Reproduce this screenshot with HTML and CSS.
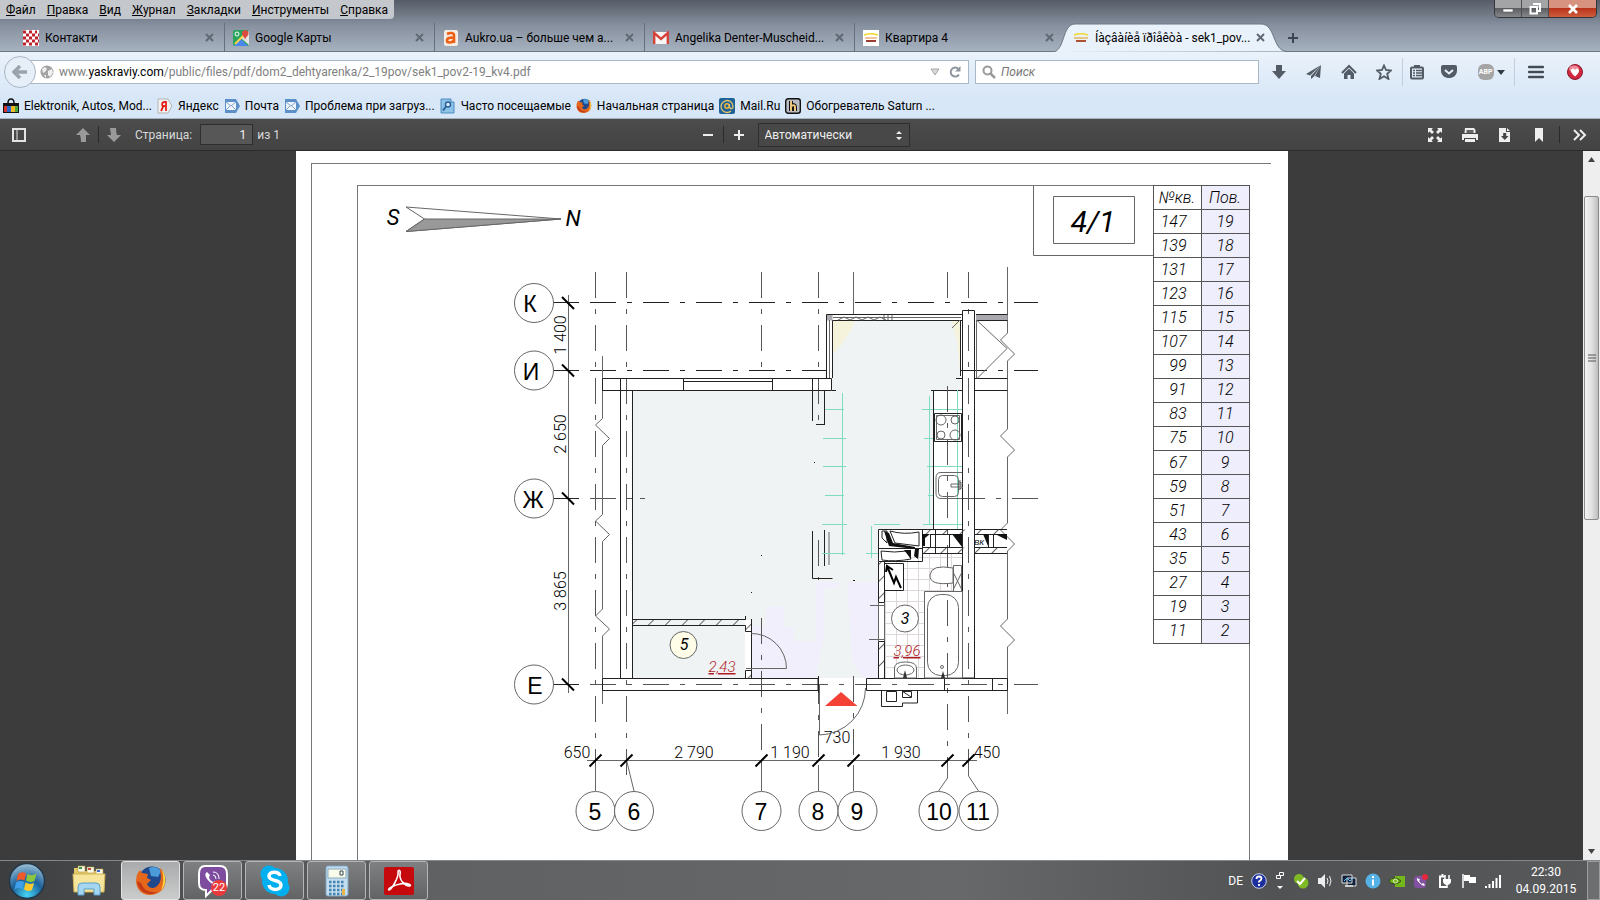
FILE: index.html
```html
<!DOCTYPE html>
<html lang="ru">
<head>
    <meta charset="UTF-8">
    <meta name="viewport" content="width=device-width, initial-scale=1.0">
    <title>sek1_pov2-19_kv4.pdf</title>
    <link rel="stylesheet" href="styles.css">
</head>
<body>
    <!-- Window frame: menu and tabs -->
    <header class="titlebar">
        <div class="menu-row">
            <nav class="menu">
                <button><u>Ф</u>айл</button>
                <button><u>П</u>равка</button>
                <button><u>В</u>ид</button>
                <button><u>Ж</u>урнал</button>
                <button><u>З</u>акладки</button>
                <button><u>И</u>нструменты</button>
                <button><u>С</u>правка</button>
            </nav>
            <div class="window-controls">
                <button class="win-btn" aria-label="Свернуть"><svg width="12" height="10"><rect x="1" y="5" width="10" height="3" fill="#fff" stroke="#555" stroke-width=".6"/></svg></button>
                <button class="win-btn" aria-label="Восстановить"><svg width="12" height="12"><path d="M4 1h7v7h-2M1.500 4h6.500v6.500h-6.500z" fill="none" stroke="#fff" stroke-width="2"/></svg></button>
                <button class="win-btn win-close" aria-label="Закрыть"><svg width="12" height="10"><path d="M2 1l8 8M10 1l-8 8" stroke="#fff" stroke-width="2.600"/></svg></button>
            </div>
        </div>
        <div class="tabs">
            <div class="tab">
                <svg class="icon" viewBox="0 0 16 16"><rect width="16" height="16" fill="#fff"/><path d="M0 2h14M3 5h13M0 8h9M12 8h4M3 11h13M0 14h16" stroke="#c0222c" stroke-width="3" stroke-dasharray="3 3"/></svg>
                <span class="tab-title">Контакти</span>
                <button class="tab-close" aria-label="Закрыть вкладку"><svg width="9" height="9"><path d="M1 1l7 7M8 1l-7 7"/></svg></button>
            </div>
            <div class="tab">
                <svg class="icon" viewBox="0 0 16 16"><rect width="16" height="16" rx="2" fill="#28a45c"/><path d="M8 8l8-7v14z" fill="#e4e4e4"/><path d="M1 16l7-7 7 7z" fill="#4a87ee"/><path d="M2 14L14 2" stroke="#fbd34c" stroke-width="2"/><path d="M12 10c0-3-3-4-3-6.500a3 3 0 0 1 6.500 0c0 2.500-3 3.500-3.500 6.500z" fill="#dd4b3e"/><circle cx="4" cy="4" r="2" fill="none" stroke="#fff"/></svg>
                <span class="tab-title">Google Карты</span>
                <button class="tab-close" aria-label="Закрыть вкладку"><svg width="9" height="9"><path d="M1 1l7 7M8 1l-7 7"/></svg></button>
            </div>
            <div class="tab">
                <svg class="icon" viewBox="0 0 16 16"><rect x="1" width="14" height="16" rx="2" fill="#f4ece4"/><path d="M4 4c3-1.500 7-1.500 7 1.500V13M11 8c-4-1-7 0-7 2.500s4 3 7 0" fill="none" stroke="#ee6011" stroke-width="2.600"/></svg>
                <span class="tab-title">Aukro.ua – больше чем а...</span>
                <button class="tab-close" aria-label="Закрыть вкладку"><svg width="9" height="9"><path d="M1 1l7 7M8 1l-7 7"/></svg></button>
            </div>
            <div class="tab">
                <svg class="icon" viewBox="0 0 16 16"><path d="M0 2h16v12H0z" fill="#f6f6f6"/><path d="M1.200 14V3l6.800 6 6.800-6v11" fill="none" stroke="#d5433a" stroke-width="2.400"/></svg>
                <span class="tab-title">Angelika Denter-Muscheid...</span>
                <button class="tab-close" aria-label="Закрыть вкладку"><svg width="9" height="9"><path d="M1 1l7 7M8 1l-7 7"/></svg></button>
            </div>
            <div class="tab">
                <svg class="icon" viewBox="0 0 16 16"><rect width="16" height="16" fill="#fff"/><path d="M1 5q7-2.500 14 0" fill="none" stroke="#f1d829" stroke-width="1.500"/><path d="M2 8h12" stroke="#e59a5a" stroke-width="1.200"/><path d="M3 11h10" stroke="#9c3c32" stroke-width="2"/></svg>
                <span class="tab-title">Квартира 4</span>
                <button class="tab-close" aria-label="Закрыть вкладку"><svg width="9" height="9"><path d="M1 1l7 7M8 1l-7 7"/></svg></button>
            </div>
            <div class="tab tab-active">
                <svg class="tab-shape" width="234" height="29" viewBox="0 0 234 29"><path d="M0 29C12 28 9 1 22 1H208C223 1 219 28 234 28.500" fill="#e9f1fb" stroke="#6c7784"/></svg>
                <svg class="icon" viewBox="0 0 16 16"><path d="M1 5q7-2.500 14 0" fill="none" stroke="#f1d829" stroke-width="1.500"/><path d="M1 8h14" stroke="#e5b45a" stroke-width="1.500"/><path d="M3 11h10" stroke="#ac5132" stroke-width="2"/></svg>
                <span class="tab-title">Íàçâàíèå ïðîåêòà - sek1_pov...</span>
                <button class="tab-close" aria-label="Закрыть вкладку"><svg width="9" height="9"><path d="M1 1l7 7M8 1l-7 7"/></svg></button>
            </div>
            <button class="new-tab" aria-label="Новая вкладка"><svg width="12" height="12"><path d="M6 1v10M1 6h10" stroke="#3c4652" stroke-width="2"/></svg></button>
        </div>
    </header>

    <!-- Address bar and bookmarks -->
    <div class="browser-bars">
        <div class="nav-bar">
            <button class="back" aria-label="Назад"><svg width="16" height="14"><path d="M8 1L2 7l6 6M3 7h12" fill="none" stroke="#9aa3ad" stroke-width="3.500"/></svg></button>
            <div class="url-box">
                <svg class="globe" viewBox="0 0 14 14"><circle cx="7" cy="7" r="6.500" fill="#a3a3a3"/><path d="M2 4l3-2 2 2-2 3-2 1zM8 6l4-2 1 4-3 4-2-2zM4 10l2 0v3z" fill="#f0f0f0"/></svg>
                <span class="url">www.<b>yaskraviy.com</b>/public/files/pdf/dom2_dehtyarenka/2_19pov/sek1_pov2-19_kv4.pdf</span>
                <svg width="10" height="8"><path d="M1 1h8l-4 6z" fill="#d8d8d8" stroke="#a8a8a8"/></svg>
                <button class="reload" aria-label="Обновить"><svg width="14" height="14"><path d="M10.500 4A4.500 4.500 0 1 0 11 9.500" fill="none" stroke="#8e959c" stroke-width="2"/><path d="M12.500 1v5.500H7z" fill="#8e959c"/></svg></button>
            </div>
            <div class="search-box">
                <svg width="14" height="14"><circle cx="5.500" cy="5.500" r="4" fill="none" stroke="#9a9a9a" stroke-width="2"/><path d="M8.500 8.500l4.500 4.500" stroke="#9a9a9a" stroke-width="2.500"/></svg>
                <input type="search" placeholder="Поиск" aria-label="Поиск">
            </div>
            <div class="tools">
                <button class="tool" aria-label="Загрузки"><svg width="16" height="16"><path d="M5 1h6v6h4l-7 8-7-8h4z" fill="#525b66"/></svg></button>
                <button class="tool" aria-label="Отправить"><svg width="16" height="16"><path d="M15 1L0 10l4 1.500zM15 1L5 12v3l3-2.500zM15 1l-1 13-5-2z" fill="#525b66"/></svg></button>
                <button class="tool" aria-label="Домой"><svg width="16" height="16"><path d="M1 9l7-7 7 7" fill="none" stroke="#525b66" stroke-width="2"/><path d="M3 9.500l5-5 5 5V15H9.500v-4h-3v4H3z" fill="#525b66"/></svg></button>
                <button class="tool" aria-label="В закладки"><svg width="16" height="16"><path d="M8 1.500l2 4.500 5 .5-3.800 3.300L12.500 15 8 12.200 3.500 15l1.300-5.200L1 6.500 6 6z" fill="none" stroke="#525b66" stroke-width="1.800"/></svg></button>
                <button class="tool tool-list" aria-label="Список закладок"><svg width="16" height="16"><path d="M5 1h6v3H5z" fill="#525b66"/><rect x="2" y="3.500" width="12" height="11" rx="1" fill="none" stroke="#525b66" stroke-width="2"/><path d="M4 6.500h2M7 6.500h6M4 9h2M7 9h6M4 11.500h2M7 11.500h6" stroke="#525b66" stroke-width="1.300"/></svg></button>
                <button class="tool" aria-label="Pocket"><svg width="16" height="16"><path d="M0 3q0-2 2-2h12q2 0 2 2v3.500c0 10-16 10-16 0z" fill="#525b66"/><path d="M4 6l4 3.500L12 6" fill="none" stroke="#eaf2fb" stroke-width="2"/></svg></button>
                <button class="tool tool-abp"><span class="abp">ABP</span><svg width="8" height="5"><path d="M0 0h8l-4 5z" fill="#333b45"/></svg></button>
                <button class="tool tool-menu" aria-label="Меню"><svg width="16" height="14"><path d="M1 2h14M1 7h14M1 12h14" stroke="#424b56" stroke-width="2.500" stroke-linecap="round"/></svg></button>
                <button class="tool tool-heart" aria-label="Избранное"><svg width="16" height="16"><circle cx="8" cy="8" r="7.500" fill="#d0283f" stroke="#8e1a2e"/><ellipse cx="7" cy="5" rx="5" ry="3.500" fill="#f08a98"/><path d="M8 12.500C2 8 4 4.500 6 4.500q1.500 0 2 1.500 .5-1.500 2-1.500c2 0 4 3.500-2 8z" fill="#fff"/></svg></button>
            </div>
        </div>
        <nav class="bookmarks">
            <a href="#"><svg class="icon" viewBox="0 0 16 16"><path d="M5 5q0-4 3-4t3 4" fill="none" stroke="#111" stroke-width="1.500"/><path d="M0 5h16v10H0z" fill="#111"/><path d="M1 8h3v6H1z" fill="#d8332b"/><path d="M4 8h4v6H4z" fill="#2b66c9"/><path d="M8 8h4v6H8z" fill="#efb91f"/><path d="M12 8h3v6h-3z" fill="#4ca63a"/></svg>Elektronik, Autos, Mod...</a>
            <a href="#"><svg class="icon" viewBox="0 0 16 16"><path d="M1 1h10l4 7-4 7H1z" fill="#f2f2f2" stroke="#b3b3b3"/><path d="M9 13V4H7.500Q4 4.500 5.500 8H9M6.500 8L4 13" fill="none" stroke="#e3231b" stroke-width="1.800"/></svg>Яндекс</a>
            <a href="#"><svg class="icon" viewBox="0 0 16 16"><path d="M1 1h11l4 7-4 7H1z" fill="#5d8fc8"/><rect x="2" y="4" width="10" height="8" fill="#eef5fc"/><path d="M2 4l5 4 5-4M2 12l4-4M12 12L8 8" fill="none" stroke="#7fa1c6"/></svg>Почта</a>
            <a href="#"><svg class="icon" viewBox="0 0 16 16"><path d="M1 1h11l4 7-4 7H1z" fill="#5d8fc8"/><rect x="2" y="4" width="10" height="8" fill="#eef5fc"/><path d="M2 4l5 4 5-4M2 12l4-4M12 12L8 8" fill="none" stroke="#7fa1c6"/></svg>Проблема при загруз...</a>
            <a href="#"><svg class="icon" viewBox="0 0 16 16"><path d="M1 1h10v3h3v11H1z" fill="#8ec3e8" stroke="#4a8cc0"/><circle cx="8" cy="6.500" r="2.500" fill="#dff0fb" stroke="#2c629b" stroke-width="1.500"/><path d="M6 8.500l-3 4" stroke="#2c629b" stroke-width="2"/></svg>Часто посещаемые</a>
            <a href="#"><svg class="icon" viewBox="0 0 32 32"><use href="#firefox"/></svg>Начальная страница</a>
            <a href="#"><svg class="icon" viewBox="0 0 16 16"><rect width="16" height="16" rx="2" fill="#1e6297"/><circle cx="8" cy="8" r="2.200" fill="none" stroke="#e9b43c" stroke-width="1.500"/><path d="M12 13A6 6 0 1 1 14 8q0 3-2 2.500T10.500 6" fill="none" stroke="#e9c46a" stroke-width="1.300"/></svg>Mail.Ru</a>
            <a href="#"><svg class="icon" viewBox="0 0 16 16"><rect x=".7" y=".7" width="14.600" height="14.600" rx="2.500" fill="#b9bcc4" stroke="#111" stroke-width="1.400"/><path d="M6 3v10M6 8q4-2 4 1v4" fill="none" stroke="#111" stroke-width="4"/><path d="M6 3v10M6 8q4-2 4 1v4" fill="none" stroke="#efc27e" stroke-width="2"/></svg>Обогреватель Saturn ...</a>
        </nav>
    </div>

    <!-- PDF viewer toolbar -->
    <div class="pdf-toolbar">
        <div class="pdf-left">
            <button aria-label="Боковая панель"><svg width="14" height="14"><path d="M1 1h12v12H1z" fill="none" stroke="#e3e3e3" stroke-width="2"/><path d="M5 1v12" stroke="#e3e3e3"/></svg></button>
            <button class="page-up" aria-label="Предыдущая"><svg width="14" height="14"><path d="M7 0l7 7h-4v7H5Q5 10 4 7H0z" fill="#9a9a9a"/></svg></button>
            <i class="split"></i>
            <button aria-label="Следующая"><svg width="14" height="14"><path d="M7 14l7-7h-4Q9 4 9 0H3l1 7H0z" fill="#9a9a9a"/></svg></button>
            <label for="page">Страница:</label>
            <input id="page" type="text" value="1">
            <span class="page-count">из 1</span>
        </div>
        <div class="pdf-center">
            <button aria-label="Уменьшить"><svg width="12" height="12"><path d="M1 6h10" stroke="#eee" stroke-width="2"/></svg></button>
            <i class="split"></i>
            <button aria-label="Увеличить"><svg width="12" height="12"><path d="M6 1v10M1 6h10" stroke="#eee" stroke-width="2"/></svg></button>
            <div class="scale">
                <select aria-label="Масштаб"><option>Автоматически</option></select>
                <svg class="scale-arrows" width="6" height="9"><path d="M0 3l3-3 3 3zM0 6h6L3 9z" fill="#eee"/></svg>
            </div>
        </div>
        <div class="pdf-right">
            <button aria-label="Полный экран"><svg width="14" height="14"><path d="M0 0h5L3.500 1.500 6 4 4 6 1.500 3.500 0 5zM14 0v5l-1.500-1.500L10 6 8 4l2.500-2.500L9 0zM0 14V9l1.500 1.500L4 8l2 2-2.500 2.500L5 14zM14 14H9l1.500-1.500L8 10l2-2 2.500 2.500L14 9z" fill="#eee"/></svg></button>
            <button aria-label="Печать"><svg width="16" height="14"><path d="M3 0h9l1.500 2v3h-11zM0 6h16v6h-2v-2H2v2H0zM3 11h10v3H3z" fill="#eee"/><path d="M4.500 2h7v3h-7z" fill="#666"/></svg></button>
            <button aria-label="Скачать"><svg width="14" height="14"><path d="M1 0h7v4h4v10H1zM9 0l3 3H9z" fill="#eee"/><path d="M5.200 5h3v3h2.300L6.700 12 3 8h2.200z" fill="#444"/></svg></button>
            <button aria-label="Закладка"><svg width="14" height="14"><path d="M3 0h8v14L7 10l-4 4z" fill="#eee"/></svg></button>
            <i class="split"></i>
            <button aria-label="Инструменты"><svg width="14" height="12"><path d="M1 1l5 5-5 5M7 1l5 5-5 5" fill="none" stroke="#eee" stroke-width="2"/></svg></button>
        </div>
    </div>

    <!-- Document -->
    <main class="viewer">
        <div class="page-area">
            <div class="page">
                <div class="outer-frame">
                    <div class="inner-frame">
                        <svg class="plan" width="795" height="674" viewBox="358 186 795 674">
                            <defs>
                                <pattern id="hatch" width="12" height="12" patternUnits="userSpaceOnUse" patternTransform="rotate(45)"><path d="M0 0v12" stroke="#333" stroke-width="1.500"/></pattern>
                                <pattern id="tile" x="885" y="557" width="11" height="11" patternUnits="userSpaceOnUse"><path d="M0 .5h11M.5 0v11" stroke="#ded8da"/></pattern>
                            </defs>

                            <!-- Title box and compass -->
                            <path class="frame" d="M1033.500 186v69.500h119.500M1053.500 196.500h81v47h-81z"/>
                            <text class="flat-type" x="1093" y="232">4/1</text>
                            <path class="line" d="M406 207l155 12-155 12.500 18.500-12.500z"/>
                            <path class="line filled" d="M424.500 219H561L406 231.500z"/>
                            <text class="compass" x="393" y="225">S</text>
                            <text class="compass" x="573" y="226">N</text>

                            <!-- Room fills -->
                            <path d="M633 391H832V321H961V391H933V529H878V678H752V620H745V678H633z" fill="#eff3f4"/>
                            <path d="M833 321h22l-4 10-4 5-5 8-9 10zM952 321h8v50l-3-30z" fill="#f6f3dd"/>
                            <path d="M766 607h18v20h10v14h22v-59h22v6h-14v50l-9 40h-63v-52h14zM847 582h31v96h-16l-10-18z" fill="#f0effb"/>
                            <path d="M885 553h77v125h-77z" fill="url(#tile)"/>

                            <!-- Axes -->
                            <path class="axis axis-main" d="M590 302.500H1038M590 370.500H826M961 370.500H1038"/>
                            <path class="axis" d="M590 498.500H633M640 498.500h5M943 498.500h8M959 498.500H1038M590 684.500H1038"/>
                            <path class="axis" d="M595.500 272V792M626.500 272V775M761.500 272V378M761.500 618V770M818.500 272V425M818.500 540V580M818.500 678V770M853.500 676V770M947.500 272V303M947.500 386V770M968.500 272V770"/>
                            <path class="line" d="M853.500 272v43M818.500 765v26M853.500 765v26M761.500 765v26M595.500 765v26M626.500 760l7.500 31M947.500 765v13l-9 13M968.500 765v11l10 15"/>
                            <path class="line" d="M568.500 295v398M587 760.500h390"/>
                            <path class="wall" d="M553 302.500h26M553 370.500h26M553 498.500h26M553 684.500h26"/>
                            <path class="tick" d="M562 297l12 12M562 364.500l12 12M562 492.500l12 12M562 678.500l12 12"/>
                            <path class="tick" d="M589.500 766.500l12-12M620.500 766.500l12-12M755.500 766.500l12-12M812.500 766.500l12-12M847.500 766.500l12-12M941.500 766.500l12-12M962.500 766.500l12-12"/>

                            <!-- Axis marks -->
                            <g class="mark">
                                <circle cx="534" cy="303" r="19.500"/>
                                <circle cx="534" cy="370.500" r="19.500"/>
                                <circle cx="534" cy="498.500" r="19.500"/>
                                <circle cx="534" cy="684.500" r="19.500"/>
                                <circle cx="595.500" cy="811" r="19.500"/>
                                <circle cx="634" cy="811" r="19.500"/>
                                <circle cx="761.500" cy="811" r="19.500"/>
                                <circle cx="818.500" cy="811" r="19.500"/>
                                <circle cx="857.500" cy="811" r="19.500"/>
                                <circle cx="938.500" cy="811" r="19.500"/>
                                <circle cx="978.500" cy="811" r="19.500"/>
                            </g>
                            <g class="mark-text">
                                <text x="530" y="312">К</text>
                                <text x="531" y="380">И</text>
                                <text x="533" y="508">Ж</text>
                                <text x="535" y="694">Е</text>
                                <text x="595" y="820">5</text>
                                <text x="634" y="820">6</text>
                                <text x="761" y="820">7</text>
                                <text x="818" y="820">8</text>
                                <text x="857" y="820">9</text>
                                <text x="939" y="820">10</text>
                                <text x="978" y="820">11</text>
                            </g>
                            <g class="dim">
                                <text transform="translate(566 335) rotate(-90)">1 400</text>
                                <text transform="translate(566 434) rotate(-90)">2 650</text>
                                <text transform="translate(566 591) rotate(-90)">3 865</text>
                                <text x="577" y="758">650</text>
                                <text x="694" y="758">2 790</text>
                                <text x="790" y="758">1 190</text>
                                <text x="837" y="743">730</text>
                                <text x="901" y="758">1 930</text>
                                <text x="987" y="758">450</text>
                            </g>

                            <!-- Section break lines -->
                            <path class="line" d="M602.500 356v62.500l-7 6.500 14 13.500-7 7v69l-7 6.500 14 13.500-7 7v67.500l-7 7 14 13-7 7V704"/>
                            <path class="line" d="M1007.500 267v66l-7 7 14 14-7 7v68l-7 7 14 14-7 7v66l-7 7 14 14-7 7v68l-7 7 14 14-7 7V714"/>

                            <!-- Outer walls -->
                            <path class="wall" d="M602.500 378.500H831.500V390.500H602.500zM620.500 378V678M632.500 390V678M602.500 678.500H818V690.500H602.500zM866.500 678.500H1007.500V690.500H866.500zM944.500 678v12M992.500 678v12M683.500 378v12M772.500 378v12M683 381.500h89M812.500 378v43M824.500 390v34M816 424.500h9M818.500 676v17"/>
                            <path class="wall" d="M832 390.500h4M812.500 531v47.500h20M824.500 530v36M974.500 378.500h33M974.500 390.500h33M931 390.500h31"/>
                            <path class="line" d="M829 532v33"/>
                            <path d="M826.500 314.500h6v6h-6zM976 314.500h31.500v6H976z" fill="#aaa9b0"/>
                            <path class="wall" d="M826.500 378.500v-64h135.500M832.500 378v-57.500h129.500M960.500 320v56M956 378.500h6M976 314.500h31.500M976 320.500h31.500"/>
                            <path class="line" d="M829.500 320v58M833 317.500h128M838 320l6-3 6 3 6-3 6 3 6-3 6 3 6-3 6 3M884 315v5M888 315v5M892 315v5M952 328l8-8"/>
                            <path class="line" d="M976.500 320v58M977 320.500l30 28-30 30"/>
                            <path class="wall" d="M962.500 310.500h12V678h-12z"/>

                            <!-- Furniture outline -->
                            <path class="green" d="M842.500 393v162M825 409.500h19M823 438.500h23M823 466.500h23M825 495.500h19M822 524.500h25M822 553.500h23M874 524.500h26M871.500 526v32M866 553.500h12M929.500 396v128M922 409.500h40M924 438.500h38M927 466.500h35M928 495.500h34M923 524.500h39M957.500 390v136"/>

                            <!-- Kitchen -->
                            <path d="M934 391h28v138h-28z" fill="#fff"/>
                            <path class="green" d="M934 409.500h28M934 466.500h28M934 524.500h28M957.500 391v138"/>
                            <path class="axis" d="M947.500 386V530"/>
                            <path class="wall" d="M933.500 390v139"/>
                            <path class="wall" d="M934.500 413.500h27v28h-27z"/>
                            <g class="outline">
                                <path d="M936.500 415.500h23v24h-23z"/>
                                <circle cx="941" cy="420" r="5"/>
                                <circle cx="955" cy="420" r="4"/>
                                <circle cx="941" cy="435" r="4"/>
                                <circle cx="955" cy="435" r="5"/>
                                <path d="M962 472.500h-21q-5 0-5 5v16q0 5 5 5h21"/>
                                <rect x="938.500" y="475.500" width="20" height="21" rx="4"/>
                                <path d="M951 484h10v3h-10zM960 480v10M958 481l5 3M958 490l5-3"/>
                            </g>

                            <!-- Ducts -->
                            <path d="M922 529.500h85.500v5H922zM922 547.500h85.500v5.500H922z" fill="url(#hatch)"/>
                            <path class="wall" d="M878.500 529.500h44v32h-44zM878 548.500h44M922 529.500h40M974 529.500h33M930 534.500h32M974 534.500h33M922 547.500h40M974 547.500h33M922 553.500h40M974 553.500h33M930.500 534v13M949.500 534v13M988.500 534v13M993.500 534v13M935.500 530v23"/>
                            <path class="duct" d="M890 531q14 4 29 1v14l-24-3zM881 551q14 2 26 0l4 8q-16 3-29 1zM882 531h5v12l-5-5z"/>
                            <path d="M884 531l5 2 4 10 22 4v2l-26-3zM904 550h7v9zM915 549h4l-1 10-4-3zM922 534h8l-5 4v8h-3zM952 534h10v13zM983 534h5v12zM995 534h12v6z" fill="#111"/>
                            <text class="duct-text" x="979" y="545">ВК</text>

                            <!-- Bathroom -->
                            <path d="M878.500 562h6v40h-6zM878.500 641h6v37h-6z" fill="url(#hatch)"/>
                            <path class="wall" d="M878.500 562v40.500h6M884.500 562v40M884.500 641v37M878.500 678v-36.500h6"/>
                            <path class="line" d="M870 605.500h14M869 639.500h15M884.500 602v39M878.500 602v39"/>
                            <path class="wall solid" d="M884.500 563.500h19v27h-19z"/>
                            <path d="M901 588l-5-11-2 6-7-17M886 572l1-6 6 4" fill="none" stroke="#000" stroke-width="2"/>
                            <g class="outline solid">
                                <path d="M953 568q-22-4-23 7t23 8z"/>
                                <path d="M953.500 565.500h8v27h-8zM953.500 573l8 16M961.500 573l-8 16"/>
                                <path d="M924.500 591.500h38v86.500h-38z"/>
                                <rect x="927.500" y="594.500" width="31" height="81" rx="13"/>
                                <circle cx="942" cy="667" r="1.500"/>
                                <path d="M894.500 678v-10q0-6 11-6t11 6v10z"/>
                                <ellipse cx="905.500" cy="670" rx="8.500" ry="5"/>
                                <circle cx="905" cy="618.500" r="13.500"/>
                            </g>
                            <path class="axis" d="M947.500 600V678"/>
                            <path d="M905 670l-2 8h4zM943 671l-2 7h4z" fill="#333"/>
                            <text class="room" x="905" y="624">3</text>
                            <text class="area" x="907" y="656">3,96</text>
                            <path class="wall" d="M881.500 690v16.500h21V703h15v-13M886.500 691.500h10v10h-10zM902.500 691.500h9v6h-9zM902 691l9 6"/>

                            <!-- Storage room -->
                            <path d="M632.500 619.500h113v6h-113zM745.500 619.500h6v12h-6zM745.500 670.500h6v8h-6z" fill="url(#hatch)"/>
                            <path class="wall" d="M745.500 619.500h-113v6h113v6h6v-12M745.500 616v4M751.500 619v59M745.500 678v-7.500h6"/>
                            <path class="line" d="M751 633.500A35 35 0 0 1 786.500 668.500H746"/>
                            <circle class="outline cream" cx="683.500" cy="645" r="13.500"/>
                            <text class="room" x="684" y="650">5</text>
                            <text class="area" x="722" y="672">2,43</text>

                            <!-- Entrance -->
                            <path class="line" d="M819.500 684v51A47 47 0 0 0 865.500 688"/>
                            <path d="M825 706h32.500L841 692z" fill="#f44336"/>
                            <path d="M814 462h1v1h-1zM751 592h1v1h-1zM761 555h1v1h-1zM853 580h2v1h-2z" fill="#222"/>
                        </svg>
                        <table class="flats">
                            <tbody>
                                <tr><th>№кв.</th><th>Пов.</th></tr>
                                <tr><td>147</td><td>19</td></tr>
                                <tr><td>139</td><td>18</td></tr>
                                <tr><td>131</td><td>17</td></tr>
                                <tr><td>123</td><td>16</td></tr>
                                <tr><td>115</td><td>15</td></tr>
                                <tr><td>107</td><td>14</td></tr>
                                <tr><td>99</td><td>13</td></tr>
                                <tr><td>91</td><td>12</td></tr>
                                <tr><td>83</td><td>11</td></tr>
                                <tr><td>75</td><td>10</td></tr>
                                <tr><td>67</td><td>9</td></tr>
                                <tr><td>59</td><td>8</td></tr>
                                <tr><td>51</td><td>7</td></tr>
                                <tr><td>43</td><td>6</td></tr>
                                <tr><td>35</td><td>5</td></tr>
                                <tr><td>27</td><td>4</td></tr>
                                <tr><td>19</td><td>3</td></tr>
                                <tr><td>11</td><td>2</td></tr>
                            </tbody>
                        </table>
                    </div>
                </div>
            </div>
        </div>
        <div class="scrollbar">
            <svg width="17" height="17"><path d="M5 11l3.500-5L12 11z" fill="#444"/></svg>
            <div class="thumb"><svg width="8" height="8"><path d="M0 1h8M0 4h8M0 7h8" stroke="#555"/></svg></div>
            <svg class="scroll-down" width="17" height="17"><path d="M5 6l3.500 5L12 6z" fill="#444"/></svg>
        </div>
    </main>

    <!-- Taskbar -->
    <footer class="taskbar">
        <button class="start" aria-label="Пуск">
            <svg width="38" height="38" viewBox="0 0 38 38">
                <defs><radialGradient id="orb" cx=".5" cy=".9" r=".9"><stop offset="0" stop-color="#45d4f5"/><stop offset=".5" stop-color="#1c629c"/><stop offset="1" stop-color="#9fc2d8"/></radialGradient></defs>
                <circle cx="19" cy="19" r="17.500" fill="url(#orb)" stroke="#23384a" stroke-width="1.500"/>
                <path d="M10 12q4-3 8-.5l-1.500 7q-4-2-8 .5z" fill="#ee5a2a"/>
                <path d="M19.500 12q4 2.500 9-.5l-2 7.500q-4 2-8.500-.5z" fill="#8cc63e"/>
                <path d="M8 20.500q4-2.500 8-.5l-1.500 7q-4-2-8 .5z" fill="#3f9fe8"/>
                <path d="M17.500 20.500q4 2.500 8.500.5l-2 7q-4 2-8-.5z" fill="#fbc92c"/>
            </svg>
        </button>
        <button class="task task-plain" aria-label="Проводник">
            <svg width="34" height="32" viewBox="0 0 34 32"><path d="M2 3h8l2 3h18v20H2z" fill="#e3c968"/><path d="M6 1h7v6H6zM15 2h7v6h-7zM24 4h7v6h-7z" fill="#fbf8e5" stroke="#b79c3e" stroke-width=".6"/><path d="M7 2h3v2H7z" fill="#3a9b46"/><path d="M16 3h3v2h-3z" fill="#c34a3a"/><path d="M25 5h3v2h-3z" fill="#3b6fc9"/><path d="M1 9h32l-1 18H2z" fill="#f6e59b" stroke="#d0b558"/><path d="M6 30V22q0-4 4-4h14q4 0 4 4v8h-6v-6H12v6z" fill="#a5d6f1" stroke="#5ba0cd"/></svg>
        </button>
        <button class="task task-active" aria-label="Firefox">
            <svg width="32" height="32" viewBox="0 0 32 32">
                <g id="firefox">
                    <circle cx="17" cy="15" r="13.500" fill="#20488c"/>
                    <path d="M14 3q7-3 12 3l-3 6-7-1z" fill="#4b9bd8"/>
                    <path d="M25 3c7 6 7 18 1 23S9 32 4 25 1 9 5 5l2 3 6 1-1 4 4 2-4 4c2 5 8 5 11 1 5-6 2-11 2-17z" fill="#e5671c"/>
                    <path d="M27 5c5 7 4 16-1 20q4-9 1-20z" fill="#fbd63e"/>
                    <path d="M2 16c1 11 12 16 21 11-8 1-14-1-17-9z" fill="#c43a17"/>
                </g>
            </svg>
        </button>
        <button class="task" aria-label="Viber">
            <svg width="32" height="34" viewBox="0 0 32 34"><path d="M8 2h15q7 0 7 8v9q0 7-7 7h-8l-6 6v-6q-7 0-7-7v-9q0-8 6-8z" fill="#7d4c9e" stroke="#fff" stroke-width="2"/><path d="M10 8c-4 2 0 8 4 11s7 4 8 0l-4-2-2 1c-2-1-4-3-4-5l1-2z" fill="#fff"/><path d="M16 8q6 0 6 7M16 11q3 0 3 4" fill="none" stroke="#fff"/></svg>
            <span class="badge">22</span>
        </button>
        <button class="task" aria-label="Skype">
            <svg width="32" height="32" viewBox="0 0 32 32"><circle cx="16" cy="16" r="13" fill="#00aff0"/><circle cx="10" cy="9" r="8.500" fill="#00aff0"/><circle cx="22" cy="23" r="8.500" fill="#00aff0"/><path d="M21 11c-1-5-11-5-11 0 0 6 12 3 12 9s-11 6-12 0" fill="none" stroke="#fff" stroke-width="3.500"/></svg>
        </button>
        <button class="task" aria-label="Калькулятор">
            <svg width="24" height="32" viewBox="0 0 24 32"><rect x="1" y="1" width="22" height="30" rx="2" fill="#c3def0" stroke="#7fa6c3"/><rect x="3" y="4" width="18" height="9" fill="#f8fbe9" stroke="#8caabd"/><path d="M15 6h3v4h-3z" fill="none" stroke="#345"/><path d="M4 17h16M4 21h16M4 25h16M4 29h16" stroke="#4682ad" stroke-width="2.500" stroke-dasharray="2.500 1.500"/><path d="M17 24h3v6h-3z" fill="#e9b547"/></svg>
        </button>
        <button class="task" aria-label="Adobe Reader">
            <svg width="30" height="28" viewBox="0 0 30 28"><rect width="30" height="28" rx="2" fill="#c5090c"/><path d="M5 23C8 22 15 10 14 5c0-3 3-2 2 2-1 6 5 12 9 12s-1-4-9-2c-6 1-13 5-11 6z" fill="none" stroke="#fff" stroke-width="1.600"/></svg>
        </button>
        <div class="tray">
            <span class="lang">DE</span>
            <svg class="help" width="16" height="16"><circle cx="8" cy="8" r="7.300" fill="#1c2f9c" stroke="#c9d0e8"/><path d="M5.500 6q0-2.500 2.500-2.500t2.500 2q0 1.500-2.500 3v1M8 11v2" fill="none" stroke="#fff" stroke-width="1.800"/></svg>
            <svg width="10" height="20"><path d="M4.500 1.500h4v3h-4zM1.500 4.500h4v3h-4z" fill="none" stroke="#fff"/><path d="M2 15h6l-3 3z" fill="#fff"/></svg>
            <svg width="16" height="16"><circle cx="6" cy="6" r="5" fill="#7fba22"/><circle cx="10" cy="10" r="5.500" fill="#7fba22"/><path d="M4 8l3 3 5-6" fill="none" stroke="#fff" stroke-width="2"/></svg>
            <svg width="16" height="16"><path d="M1 5h3l4-4v14l-4-4H1z" fill="#eee"/><path d="M10 5q2 3 0 6M12.500 3q3 5 0 10" fill="none" stroke="#eee"/></svg>
            <svg width="16" height="16"><path d="M1 2h10v8H1zM6 5h9v8H6z" fill="#10203a" stroke="#ddd"/><path d="M4 12h8v2H4z" fill="#ccc"/><path d="M3 8l3-3 3 3 3-3" fill="none" stroke="#5ec0ff"/></svg>
            <svg width="16" height="16"><circle cx="8" cy="8" r="7.500" fill="#55b1e6"/><path d="M8 3v2M8 6.500v6" stroke="#fff" stroke-width="2"/></svg>
            <svg width="16" height="16"><path d="M6 3h10v11H6z" fill="#74b71b"/><path d="M0 8q5-6 12 0-7 6-12 0z" fill="#74b71b" stroke="#33500f"/><circle cx="6.500" cy="8" r="2" fill="none" stroke="#dff0c4"/></svg>
            <svg width="16" height="16"><rect x="1" y="3" width="12" height="12" rx="3" fill="#82519f"/><path d="M4 5q-1 2 3 5.500T12 12l-2-2-1.500 1-2.500-3 1-1.500z" fill="#fff"/><circle cx="12" cy="4" r="3" fill="#e5283c"/></svg>
            <svg width="16" height="16"><path d="M8 3.500H3V14h7M5.500 1v2" fill="none" stroke="#fff" stroke-width="2"/><path d="M6 6h8v3q-1 3-4 3t-4-3z" fill="#fff"/><path d="M8 2v4M12 2v4M10 11v4" stroke="#fff" stroke-width="1.500"/></svg>
            <svg width="16" height="16"><path d="M2 1v14" stroke="#fff" stroke-width="1.500"/><path d="M3 2h6v2h6v6H8V8H3z" fill="#fff"/></svg>
            <svg width="16" height="16"><path d="M1 13v2M4.500 11v4M8 8v7M11.500 5v10M15 2v13" stroke="#fff" stroke-width="2"/></svg>
            <div class="clock"><span>22:30</span><span>04.09.2015</span></div>
            <button class="show-desktop" aria-label="Показать рабочий стол"></button>
        </div>
    </footer>
</body>
</html>
```

FILE: styles.css
```css
* {
    box-sizing: border-box;
}

body {
    margin: 0;
    height: 100vh;
    display: flex;
    flex-direction: column;
    overflow: hidden;
    font-family: Roboto, "Noto Sans", sans-serif;
    font-size: 12px;
    color: #000;
    background: #3b3b3b;
}

button {
    display: flex;
    align-items: center;
    justify-content: center;
    padding: 0;
    border: 0;
    background: none;
    font: inherit;
    color: inherit;
}

svg {
    flex-shrink: 0;
}

.icon {
    width: 16px;
    height: 16px;
}

/* Title bar */
.titlebar {
    height: 52px;
    flex-shrink: 0;
    background: linear-gradient(#565c66, #8791a0 26px, #a6b1bf 51px);
    border-bottom: 1px solid #6c7784;
}

.menu-row {
    display: flex;
    justify-content: space-between;
    align-items: flex-start;
    height: 23px;
    padding-right: 3px;
}

.menu {
    display: flex;
    gap: 11px;
    height: 19px;
    padding: 0 6px;
    background: #c4c7cb;
    border-radius: 0 0 4px 0;
}

.window-controls {
    display: flex;
    height: 18px;
    border: 1px solid #33373d;
    border-top: 0;
    border-radius: 0 0 5px 5px;
    overflow: hidden;
}

.win-btn {
    width: 27px;
    border-right: 1px solid #4a4e54;
    background: linear-gradient(#a3a4a6 45%, #5c5e62 50%, #85878a);
}

.win-close {
    width: 47px;
    border-right: 0;
    background: linear-gradient(#d79380 45%, #b8351c 50%, #cf5c3c);
}

.tabs {
    display: flex;
    height: 29px;
    padding-left: 15px;
}

.tab {
    position: relative;
    display: flex;
    align-items: center;
    gap: 6px;
    width: 210px;
    padding: 0 10px 0 8px;
    border-right: 1px solid #66707c;
}

.tab:nth-child(5),
.tab-active {
    border-right-color: transparent;
}

.tab-shape {
    position: absolute;
    left: -12px;
    top: 0;
}

.tab-active .icon,
.tab-active .tab-title,
.tab-active .tab-close {
    position: relative;
}

.tab-title {
    flex: 1;
    white-space: nowrap;
}

.tab-close path {
    stroke: #5f6974;
    stroke-width: 2;
}

.new-tab {
    width: 36px;
}

/* Address bar and bookmarks */
.browser-bars {
    height: 67px;
    flex-shrink: 0;
    background: linear-gradient(#eaf2fb, #d8e7f7 45px);
    border-bottom: 1px solid #a4b1be;
}

.nav-bar {
    display: flex;
    align-items: center;
    height: 40px;
    padding: 0 8px 0 4px;
}

.back {
    position: relative;
    width: 32px;
    height: 32px;
    margin-right: -16px;
    border: 1px solid #a9b7c6;
    border-radius: 50%;
    background: #e6eef7;
}

.url-box,
.search-box {
    display: flex;
    align-items: center;
    height: 24px;
    background: #fff;
    border: 1px solid #a9b8c6;
}

.url-box {
    flex: 1;
    gap: 8px;
    padding: 0 6px 0 19px;
    margin-right: 6px;
}

.globe {
    width: 14px;
    height: 14px;
}

.url {
    flex: 1;
    margin-left: -3px;
    color: #808080;
}

.url b {
    font-weight: 400;
    color: #000;
}

.search-box {
    width: 284px;
    gap: 5px;
    padding: 0 6px;
}

.search-box input {
    flex: 1;
    min-width: 0;
    border: 0;
    padding: 0;
    background: none;
    font: inherit;
    font-style: italic;
}

.search-box input::placeholder {
    color: #777;
}

.tools {
    display: flex;
    align-items: center;
    width: 333px;
    padding-left: 3px;
}

.tool {
    width: 36px;
    height: 28px;
}

.tool-list {
    width: 31px;
    border-left: 1px solid #c2cedb;
}

.tool-abp {
    width: 49px;
    gap: 3px;
    padding-left: 1px;
}

.abp {
    width: 16px;
    border-radius: 6px;
    background: #a5a5a5;
    color: #fff;
    font-size: 7px;
    line-height: 16px;
    font-weight: 700;
}

.tool-menu {
    width: 44px;
    border-left: 1px solid #c2cedb;
}

.tool-heart {
    width: 36px;
}

.bookmarks {
    display: flex;
    gap: 5px;
    height: 28px;
    padding-left: 3px;
}

.bookmarks a {
    display: flex;
    align-items: center;
    gap: 5px;
    color: #000;
    text-decoration: none;
    white-space: nowrap;
}

/* PDF toolbar */
.pdf-toolbar {
    display: grid;
    grid-template-columns: 1fr auto 1fr;
    align-items: center;
    height: 32px;
    flex-shrink: 0;
    padding: 0 13px 0 12px;
    background: linear-gradient(#4b4c4b, #434343);
    border-bottom: 1px solid #2c2c2c;
    color: #d9d9d9;
}

.pdf-left,
.pdf-center,
.pdf-right {
    display: flex;
    align-items: center;
}

.split {
    width: 1px;
    height: 17px;
    background: #2a2a2a;
}

.page-up {
    margin-left: 50px;
}

.pdf-left .split {
    margin: 0 8px;
}

.pdf-left label {
    margin: 0 8px 0 14px;
}

.pdf-left input {
    width: 53px;
    height: 21px;
    padding: 0 6px;
    border: 1px solid #2e2e2e;
    background: #575757;
    color: #f2f2f2;
    font: inherit;
    text-align: right;
}

.page-count {
    margin-left: 4px;
}

.pdf-center {
    padding-left: 12px;
}

.pdf-center .split {
    margin: 0 9px;
}

.scale {
    position: relative;
    margin-left: 13px;
}

.scale select {
    width: 152px;
    height: 24px;
    padding: 0 6px;
    border: 1px solid #2e2e2e;
    background: #484848;
    color: #eee;
    font: inherit;
    appearance: none;
}

.scale-arrows {
    position: absolute;
    right: 8px;
    top: 8px;
}

.pdf-right {
    justify-content: flex-end;
    gap: 20px;
}

.pdf-right .split {
    margin: 0 -7px;
}

/* Document */
.viewer {
    display: flex;
    flex: 1;
    min-height: 0;
}

.page-area {
    flex: 1;
    overflow: hidden;
    background: #3c3c3c;
}

.page {
    width: 992px;
    min-height: 1400px;
    margin: 0 auto;
    padding: 12px 17px 0 15px;
    background: #fff;
}

.outer-frame {
    padding: 21px 21px 0 45px;
    border-top: 1px solid #777;
    border-left: 1px solid #777;
}

.inner-frame {
    display: flex;
    align-items: flex-start;
    min-height: 1300px;
    border: 1px solid #777;
}

.flats {
    width: 97px;
    height: 459px;
    margin: -1px -1px 0 0;
    border-collapse: collapse;
    table-layout: fixed;
    font-family: Roboto, "Liberation Sans", sans-serif;
    font-size: 16px;
    font-style: italic;
}

.flats th,
.flats td {
    padding: 0;
    border: 1px solid #555;
    font-weight: 300;
    line-height: 20px;
    text-align: center;
}

.flats td:first-child {
    padding-right: 14px;
    text-align: right;
}

.flats th:last-child,
.flats td:last-child {
    background: #efeefd;
}

/* Floor plan */
.plan text {
    font-family: "Liberation Sans", sans-serif;
    text-anchor: middle;
}

.frame,
.line,
.wall,
.outline {
    stroke: #666;
    fill: none;
}

.wall {
    stroke: #222;
}

.filled {
    fill: #999;
}

.solid {
    fill: #fff;
}

.cream {
    fill: #fffde8;
}

.axis {
    stroke: #555;
    fill: none;
    stroke-dasharray: 26 11 5 11;
}

.axis-main {
    stroke: #222;
}

.tick {
    stroke: #000;
    stroke-width: 2;
}

.green {
    stroke: #7fdcc0;
    fill: none;
}

.mark {
    stroke: #666;
    fill: #fff;
}

.duct {
    stroke: #222;
    fill: #fff;
}

.plan .mark-text {
    font-size: 23px;
}

.plan .dim {
    font-size: 16px;
    font-weight: 300;
}

.plan .flat-type {
    font-size: 30px;
    font-style: italic;
}

.plan .compass {
    font-size: 22px;
    font-style: italic;
}

.plan .room {
    font-size: 16px;
    font-style: italic;
}

.plan .area {
    font-size: 15px;
    font-style: italic;
    font-weight: 300;
    fill: #b01c24;
    text-decoration: underline;
}

.plan .duct-text {
    font-size: 8px;
    font-style: italic;
}

.plan .flat-type,
.plan .compass,
.plan .room,
.plan .area,
.plan .dim text {
    font-family: Roboto, "Liberation Sans", sans-serif;
}

/* Scrollbar */
.scrollbar {
    display: flex;
    flex-direction: column;
    width: 17px;
    background: #eee;
}

.thumb {
    display: flex;
    align-items: center;
    justify-content: center;
    height: 324px;
    margin: 28px 1px 0;
    border: 1px solid #8c8c8c;
    border-radius: 2px;
    background: linear-gradient(90deg, #f4f4f4, #e2e2e2 50%, #bdbdbd);
}

.scroll-down {
    margin-top: auto;
}

/* Taskbar */
.taskbar {
    display: flex;
    align-items: center;
    gap: 3px;
    height: 40px;
    flex-shrink: 0;
    border-top: 1px solid #85878a;
    background: linear-gradient(90deg, #3d3e40, #4a4b4d 8%, #5f6163 27%, #66686a 60%, #505254 80%, #58595b);
}

.start {
    width: 56px;
    padding-right: 3px;
}

.task {
    position: relative;
    width: 59px;
    height: 39px;
    border: 1px solid #b4b5b7;
    border-radius: 3px;
    background: linear-gradient(#7f8082, #626365);
}

.task-plain {
    border-color: transparent;
    background: none;
}

.task-active {
    border-color: #e2e2e2;
    background: linear-gradient(#a9aaab, #cbcccc);
}

.badge {
    position: absolute;
    right: 14px;
    bottom: 3px;
    width: 16px;
    border-radius: 8px;
    background: #ea3a3c;
    color: #fff;
    font-size: 11px;
    line-height: 16px;
    text-align: center;
}

.tray {
    display: flex;
    align-items: center;
    gap: 8px;
    height: 100%;
    margin-left: auto;
    color: #fff;
}

.clock {
    display: flex;
    flex-direction: column;
    align-items: center;
    width: 74px;
    margin-right: -4px;
    line-height: 17px;
}

.show-desktop {
    align-self: stretch;
    width: 13px;
    border: 1px solid #9a9c9e;
    background: #6c6e70;
}
```
